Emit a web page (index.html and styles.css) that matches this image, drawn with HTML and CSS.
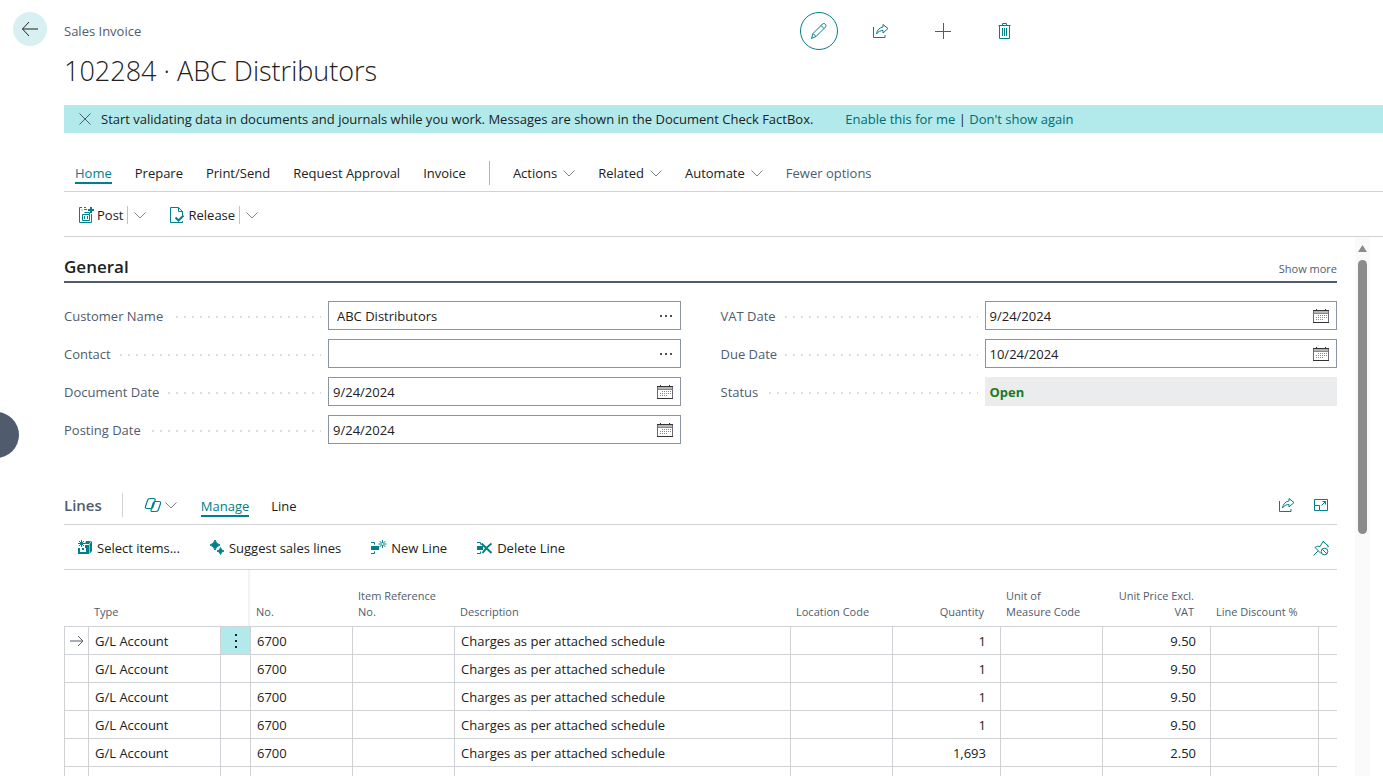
FILE: index.html
```html
<!DOCTYPE html>
<html lang="en">
<head>
  <meta charset="UTF-8" />
  <meta name="viewport" content="width=device-width, initial-scale=1.0"/>
  <title>Sales Invoice - 102284</title>
  <link rel="stylesheet" href="styles.css">
</head>
<body>
  <!-- Shared icons -->
  <svg class="icon-defs" width="0" height="0">
    <symbol id="chevron" viewBox="0 0 12 8"><path d="M.5 1.500 6 7l5.500-5.500" fill="none" stroke="currentColor"/></symbol>
    <symbol id="calendar" viewBox="0 0 16 16">
      <path d="M1 2h14v3H1z" fill="#b5b5b5"/>
      <path d="M.5 2v12M15.500 2v12" fill="none" stroke="#6a6a78"/>
      <path d="M0 2.500h16M0 14.500h16M3.500 1v2M12.500 1v2" fill="none" stroke="#333"/>
      <path d="M1 5.500h14" fill="none" stroke="#888"/>
      <path d="M5 7.500h9M3 9.500h11M3 11.500h8" fill="none" stroke="#888" stroke-dasharray="1 1"/>
    </symbol>
    <symbol id="share" viewBox="0 0 16 16">
      <path d="M.5 4v10.500h11.500V12M10 1.500l5 4-5 4.500V7.500C7.500 7.500 5 8.500 3.500 11 4 7 6.500 4.500 10 4z" fill="none" stroke="currentColor"/>
    </symbol>
  </svg>

  <button class="side-toggle" aria-label="Show list"></button>

  <header class="page-header">
    <button class="back-btn" aria-label="Back">
      <svg width="18" height="16" viewBox="0 0 18 16"><path d="M17 8H1.500M8 1 1.500 8 8 15" fill="none" stroke="currentColor"/></svg>
    </button>
    <p class="page-type">Sales Invoice</p>
    <div class="page-actions">
      <button class="edit-btn" aria-label="Edit">
        <svg width="18" height="18" viewBox="0 0 18 18"><path d="M1.500 16.500 3 11.500 12.500 2c2-1.500 4.500 1 3 3L6 14.500zM3 11.500 6 14.500M11 3.500l3 3" fill="none" stroke="currentColor"/></svg>
      </button>
      <button aria-label="Share"><svg width="16" height="16"><use href="#share"/></svg></button>
      <button aria-label="New"><svg width="16" height="16" viewBox="0 0 16 16"><path d="M8.500 0v16M0 8.500h16" fill="none" stroke="currentColor"/></svg></button>
      <button aria-label="Delete">
        <svg width="14" height="16" viewBox="0 0 14 16"><path d="M.5 2.500h12M4.500 2.500v-2h4v2M1.500 2.500v13h10v-13M4.500 5v8M6.500 5v8M8.500 5v8" fill="none" stroke="currentColor"/></svg>
      </button>
    </div>
  </header>

  <main class="page">
    <h1>102284 · ABC Distributors</h1>

    <div class="notice">
      <button class="notice-close" aria-label="Close">
        <svg width="12" height="12" viewBox="0 0 12 12"><path d="M.5.5l11 11M11.500.5l-11 11" fill="none" stroke="currentColor"/></svg>
      </button>
      <span>Start validating data in documents and journals while you work. Messages are shown in the Document Check FactBox.</span>
      <span class="notice-links"><a href="#">Enable this for me</a> | <a href="#">Don't show again</a></span>
    </div>

    <nav class="tabs">
      <a href="#" class="active">Home</a>
      <a href="#">Prepare</a>
      <a href="#">Print/Send</a>
      <a href="#">Request Approval</a>
      <a href="#">Invoice</a>
      <span class="divider"></span>
      <button>Actions <svg width="12" height="8"><use href="#chevron"/></svg></button>
      <button>Related <svg width="12" height="8"><use href="#chevron"/></svg></button>
      <button>Automate <svg width="12" height="8"><use href="#chevron"/></svg></button>
      <button class="fewer">Fewer options</button>
    </nav>

    <div class="toolbar split-bar">
      <div class="split">
        <button>
          <svg class="teal" width="15" height="16" viewBox="0 0 15 16"><path d="M3 .5H.5v15h12V7M5 .5h2M8 2.500H5M3 2.500v1M3.500 7.500h7v6h-7zM5.500 5.500h5v2M5.500 9v3M8.500 9v3" fill="none" stroke="currentColor"/><path d="M9 3h6M12 0v6" fill="none" stroke="currentColor" stroke-width="2"/></svg>
          Post
        </button>
        <button class="split-more" aria-label="More post options"><svg width="12" height="8"><use href="#chevron"/></svg></button>
      </div>
      <div class="split">
        <button>
          <svg class="teal" width="15" height="16" viewBox="0 0 15 16"><path d="M12.500 14v1.500H.5V.5h8l4 4V8M8.500.5v4h4" fill="none" stroke="currentColor"/><path d="M5.500 10.500l3 3 5-5" fill="none" stroke="currentColor" stroke-width="2"/></svg>
          Release
        </button>
        <button class="split-more" aria-label="More release options"><svg width="12" height="8"><use href="#chevron"/></svg></button>
      </div>
    </div>

    <div class="scroll-area">
      <div class="content">
        <!-- General -->
        <div class="section-head">
          <h2>General</h2>
          <a href="#">Show more</a>
        </div>
        <form class="fields">
          <div class="field-col">
            <div class="field">
              <label for="customer"><span>Customer Name</span></label>
              <div class="box lookup"><input id="customer" type="text" value="ABC Distributors"><button type="button" aria-label="Look up customer"><svg width="14" height="2" viewBox="0 0 14 2"><path d="M1 0h2v2H1zM6 0h2v2H6zM11 0h2v2h-2z" fill="#505050"/></svg></button></div>
            </div>
            <div class="field">
              <label for="contact"><span>Contact</span></label>
              <div class="box lookup"><input id="contact" type="text"><button type="button" aria-label="Look up contact"><svg width="14" height="2" viewBox="0 0 14 2"><path d="M1 0h2v2H1zM6 0h2v2H6zM11 0h2v2h-2z" fill="#505050"/></svg></button></div>
            </div>
            <div class="field">
              <label for="docDate"><span>Document Date</span></label>
              <div class="box"><input id="docDate" type="text" value="9/24/2024"><button type="button" aria-label="Pick document date"><svg width="16" height="16"><use href="#calendar"/></svg></button></div>
            </div>
            <div class="field">
              <label for="postDate"><span>Posting Date</span></label>
              <div class="box"><input id="postDate" type="text" value="9/24/2024"><button type="button" aria-label="Pick posting date"><svg width="16" height="16"><use href="#calendar"/></svg></button></div>
            </div>
          </div>
          <div class="field-col">
            <div class="field">
              <label for="vatDate"><span>VAT Date</span></label>
              <div class="box"><input id="vatDate" type="text" value="9/24/2024"><button type="button" aria-label="Pick VAT date"><svg width="16" height="16"><use href="#calendar"/></svg></button></div>
            </div>
            <div class="field">
              <label for="dueDate"><span>Due Date</span></label>
              <div class="box"><input id="dueDate" type="text" value="10/24/2024"><button type="button" aria-label="Pick due date"><svg width="16" height="16"><use href="#calendar"/></svg></button></div>
            </div>
            <div class="field">
              <label for="status"><span>Status</span></label>
              <output id="status" class="status">Open</output>
            </div>
          </div>
        </form>

        <!-- Lines -->
        <div class="lines-head">
          <h3>Lines</h3>
          <span class="divider"></span>
          <button class="copilot" aria-label="Copilot">
            <svg class="teal" width="18" height="16" viewBox="0 0 18 16"><path d="M6 1.500h3.500q2 0 1.500 1.800L9.200 9.700q-.5 1.800-2 1.800H3q-2 0-1.500-2L3.500 3.500Q4 1.500 6 1.500zM11.200 4.500H15q2 0 1.500 2l-2 6q-.5 2-2.500 2H8.500q-1.900 0-1.400-1.800L9 6.300q.5-1.800 2.200-1.800z" fill="none" stroke="currentColor" stroke-width="1.200"/></svg>
            <svg width="12" height="8"><use href="#chevron"/></svg>
          </button>
          <a href="#" class="active">Manage</a>
          <a href="#">Line</a>
          <div class="lines-icons">
            <button aria-label="Share lines"><svg width="16" height="16"><use href="#share"/></svg></button>
            <button aria-label="Expand"><svg width="16" height="16" viewBox="0 0 16 16"><path d="M1.500 8V2.500h13v11H7M1.500 8.500h5v5h-5zM8.500 8.500l4-4M9.500 4.500h3v3" fill="none" stroke="currentColor"/></svg></button>
          </div>
        </div>
        <div class="toolbar lines-bar">
          <button>
            <svg class="teal" width="16" height="16" viewBox="0 0 16 16"><path d="M4.500 0v7M1 3.500h7M2 1l5 5M7 1 2 6" fill="none" stroke="currentColor"/><path d="M9 1h5l-2 3H8zM1 8h2v4h6V8H8V5h4v9H1zM12.500 4 15 1v10l-2.500 3z" fill="currentColor"/><path d="M5 8h2v2H5z" fill="currentColor"/></svg>
            Select items...
          </button>
          <button>
            <svg class="teal" width="16" height="16" viewBox="0 0 16 16"><path d="M6 0Q7 4 11 5 7 6 6 10 5 6 1 5 5 4 6 0zM11.500 7.500Q12 10.500 15 11 12 11.500 11.500 14.500 11 11.500 8 11 11 10.500 11.500 7.500z" fill="currentColor" stroke="currentColor"/></svg>
            Suggest sales lines
          </button>
          <button>
            <svg class="teal" width="17" height="16" viewBox="0 0 17 16"><path d="M1 2.500h3.500v2M1 13.500h3.500v-2M12.500 0v8M8.500 4h8M9.700 1.200l5.600 5.600M15.300 1.200 9.700 6.800" fill="none" stroke="currentColor"/><path d="M1 6h8v4H1z" fill="currentColor"/><circle cx="12.500" cy="4" r="1" fill="#fff"/></svg>
            New Line
          </button>
          <button>
            <svg class="teal" width="17" height="16" viewBox="0 0 17 16"><path d="M1 2.500h3.500v2M1 13.500h3.500v-2" fill="none" stroke="currentColor"/><path d="M1 6h6v4H1z" fill="currentColor"/><path d="M5.500 3.500 15.500 13M15.500 3.500C12 6 9 9 6.500 13" fill="none" stroke="currentColor" stroke-width="2"/></svg>
            Delete Line
          </button>
          <button class="pin" aria-label="Unpin">
            <svg class="teal" width="16" height="16" viewBox="0 0 16 16"><path d="M.5 15.500 5 11M2 7.500l6 6M2 7.500c2-1.500 3.500-1.500 5-1l3-5 5.500 4.500-1.500 1.500M10 1l5.500 5.500" fill="none" stroke="currentColor"/><circle cx="11.500" cy="11.500" r="3.300" fill="#fff" stroke="currentColor"/><path d="M9.200 9.200l4.600 4.600" stroke="currentColor"/></svg>
          </button>
        </div>

        <table class="lines">
          <thead>
            <tr>
              <th class="c-mark"></th>
              <th class="c-type">Type</th>
              <th class="c-menu"></th>
              <th class="c-code">No.</th>
              <th class="c-code">Item Reference<br>No.</th>
              <th class="c-desc">Description</th>
              <th class="c-code">Location Code</th>
              <th class="c-num">Quantity</th>
              <th class="c-code">Unit of<br>Measure Code</th>
              <th class="c-num">Unit Price Excl.<br>VAT</th>
              <th class="c-disc">Line Discount %</th>
              <th></th>
            </tr>
          </thead>
          <tbody>
            <tr>
              <td class="mark"><svg width="14" height="12" viewBox="0 0 14 12"><path d="M0 6h13M8 1l5 5-5 5" fill="none" stroke="currentColor"/></svg></td>
              <td>G/L Account</td>
              <td class="menu"><button aria-label="Row options"><svg width="4" height="16" viewBox="0 0 4 16"><path d="M1 1h2v2H1zM1 7h2v2H1zM1 13h2v2H1z" fill="currentColor"/></svg></button></td>
              <td>6700</td><td></td><td>Charges as per attached schedule</td><td></td>
              <td class="num">1</td><td></td><td class="num">9.50</td><td></td><td></td>
            </tr>
            <tr>
              <td></td><td>G/L Account</td><td></td>
              <td>6700</td><td></td><td>Charges as per attached schedule</td><td></td>
              <td class="num">1</td><td></td><td class="num">9.50</td><td></td><td></td>
            </tr>
            <tr>
              <td></td><td>G/L Account</td><td></td>
              <td>6700</td><td></td><td>Charges as per attached schedule</td><td></td>
              <td class="num">1</td><td></td><td class="num">9.50</td><td></td><td></td>
            </tr>
            <tr>
              <td></td><td>G/L Account</td><td></td>
              <td>6700</td><td></td><td>Charges as per attached schedule</td><td></td>
              <td class="num">1</td><td></td><td class="num">9.50</td><td></td><td></td>
            </tr>
            <tr>
              <td></td><td>G/L Account</td><td></td>
              <td>6700</td><td></td><td>Charges as per attached schedule</td><td></td>
              <td class="num">1,693</td><td></td><td class="num">2.50</td><td></td><td></td>
            </tr>
            <tr>
              <td></td><td></td><td></td><td></td><td></td><td></td><td></td><td></td><td></td><td></td><td></td><td></td>
            </tr>
          </tbody>
        </table>
      </div>
      <div class="scrollbar">
        <span class="scroll-up"></span>
        <span class="scroll-thumb"></span>
      </div>
    </div>
  </main>
</body>
</html>
```
FILE: styles.css
```css
* {
  margin: 0;
  padding: 0;
  box-sizing: border-box;
}

body {
  display: flex;
  flex-direction: column;
  height: 100vh;
  overflow: hidden;
  background-color: #fff;
  color: #212121;
  font-family: "Open Sans", "Noto Sans", sans-serif;
  font-size: 13px;
  line-height: 20px;
}

button {
  border: none;
  background: none;
  color: inherit;
  font: inherit;
  cursor: pointer;
}

a {
  color: inherit;
  text-decoration: none;
}

svg {
  display: block;
  flex-shrink: 0;
}

.icon-defs {
  position: absolute;
}

.teal {
  color: #00808a;
}

.side-toggle {
  position: absolute;
  left: -27px;
  top: 412px;
  width: 46px;
  height: 46px;
  border-radius: 50%;
  background-color: #505c6d;
}

/* header */
.page-header {
  display: flex;
  align-items: center;
  height: 38px;
  margin-top: 12px;
}

.back-btn {
  display: flex;
  align-items: center;
  justify-content: center;
  align-self: flex-start;
  width: 34px;
  height: 34px;
  margin: 0 17px 0 13px;
  border-radius: 50%;
  background-color: #d9f0f2;
}

.page-type {
  width: 736px;
  color: #505c6d;
}

.page-actions {
  display: flex;
  align-items: center;
  color: #00808a;
}

.page-actions button {
  display: flex;
  align-items: center;
  justify-content: center;
  width: 38px;
  height: 38px;
  margin-right: 24px;
}

.page-actions .edit-btn {
  border: 1px solid #00808a;
  border-radius: 50%;
}

.page {
  display: flex;
  flex-direction: column;
  flex: 1;
  min-height: 0;
  margin-left: 64px;
}

h1 {
  height: 55px;
  font-size: 27px;
  font-weight: 300;
  line-height: 42px;
}

.notice {
  display: flex;
  align-items: center;
  height: 28px;
  padding-left: 15px;
  background-color: #b2eaec;
  white-space: nowrap;
}

.notice-close {
  margin-right: 10px;
  color: #505c6d;
}

.notice-links {
  margin-left: 32px;
}

.notice-links a {
  color: #006a71;
}

/* tabs */
.tabs {
  display: flex;
  align-items: center;
  gap: 23px;
  height: 59px;
  padding: 22px 0 0 11px;
  border-bottom: 1px solid #d0d2d6;
  white-space: nowrap;
}

.tabs button {
  display: flex;
  align-items: center;
  gap: 6px;
}

.tabs button svg,
.split-more svg,
.copilot svg + svg {
  color: #7b8491;
}

.active {
  box-shadow: 0 2px #00808a;
  color: #00808a;
  line-height: 18px;
}

.divider {
  width: 1px;
  height: 24px;
  background-color: #b0b5bd;
}

.tabs .fewer {
  color: #505c6d;
}

.toolbar {
  display: flex;
  align-items: center;
  height: 45px;
  padding-top: 2px;
  border-bottom: 1px solid #d0d2d6;
}

.toolbar button {
  display: flex;
  align-items: center;
  gap: 3px;
}

.split-bar {
  gap: 24px;
  padding-left: 15px;
}

.split {
  display: flex;
  align-items: center;
}

.toolbar .split-more {
  height: 18px;
  margin-left: 4px;
  padding-left: 6px;
  border-left: 1px solid #c0c3c8;
}

/* scrolling content */
.scroll-area {
  display: flex;
  flex: 1;
  min-height: 0;
  overflow: hidden;
}

.content {
  flex: 1;
  min-width: 0;
}

.scrollbar {
  width: 15px;
  margin: 0 13px 0 18px;
  padding-top: 8px;
  background-color: #fafafa;
}

.scroll-up {
  display: block;
  width: 9px;
  height: 7px;
  margin: 0 auto;
  background-color: #8b8b8b;
  clip-path: polygon(50% 0, 100% 100%, 0 100%);
}

.scroll-thumb {
  display: block;
  width: 9px;
  height: 274px;
  margin: 8px auto 0;
  border-radius: 5px;
  background-color: #8b8b8b;
}

.section-head {
  display: flex;
  align-items: flex-end;
  justify-content: space-between;
  height: 46px;
  padding-bottom: 4px;
  border-bottom: 2px solid #505c6d;
}

h2 {
  font-size: 17px;
  font-weight: 600;
  line-height: 20px;
}

.section-head a {
  color: #505c6d;
  font-size: 11px;
  line-height: 16px;
}

.fields {
  display: grid;
  grid-template-columns: 1fr 1fr;
  gap: 40px;
  padding-top: 18px;
}

.field-col {
  display: flex;
  flex-direction: column;
  gap: 9px;
}

.field {
  display: flex;
  align-items: center;
  height: 29px;
}

/* dotted leader behind the label text */
.field label {
  width: 257px;
  margin-right: 7px;
  color: #505c6d;
  background: repeating-linear-gradient(90deg, #dcdcdc 0 2px, transparent 2px 8px) 0 10px / 100% 2px no-repeat;
}

.field label span {
  display: inline-block;
  padding-right: 7px;
  background-color: #fff;
}

.box {
  display: flex;
  align-items: center;
  flex: 1;
  height: 29px;
  padding: 0 7px 0 4px;
  border: 1px solid #8a94a3;
}

.box.lookup {
  padding-left: 8px;
}

.box input {
  flex: 1;
  min-width: 0;
  border: none;
  outline: none;
  color: #212121;
  font: inherit;
}

.status {
  flex: 1;
  height: 29px;
  padding-left: 5px;
  background-color: #ebecee;
  color: #1f7a1f;
  font-weight: 700;
  line-height: 30px;
}

/* lines */
.lines-head {
  display: flex;
  align-items: center;
  height: 39px;
  margin-top: 42px;
  border-bottom: 1px solid #d0d2d6;
}

h3 {
  margin-right: 20px;
  color: #505c6d;
  font-size: 15px;
  font-weight: 600;
}

.lines-head a {
  margin: 2px 22px 0 0;
}

.lines-head .divider {
  background-color: #d0d2d6;
}

.copilot {
  display: flex;
  align-items: center;
  gap: 3px;
  margin: 0 24px 0 21px;
}

.lines-icons {
  display: flex;
  gap: 18px;
  margin-left: auto;
  padding-right: 8px;
  color: #00808a;
}

.lines-bar {
  gap: 29px;
  padding: 2px 8px 0 13px;
}

.lines-bar button {
  gap: 4px;
}

.lines-bar .pin {
  margin-left: auto;
}

.lines {
  width: 100%;
  table-layout: fixed;
  border-collapse: separate;
  border-spacing: 0;
}

.lines th {
  height: 56px;
  padding: 0 6px 6px;
  color: #505c6d;
  font-size: 11px;
  font-weight: 400;
  line-height: 16px;
  text-align: left;
  vertical-align: bottom;
}

.lines .c-mark { width: 24px; }
.lines .c-type { width: 132px; }
.lines .c-menu { width: 30px; border-right: 2px solid #f3f3f3; }
.lines .c-code { width: 102px; }
.lines .c-desc { width: 336px; }
.lines .c-num { width: 108px; padding-right: 16px; text-align: right; }
.lines .c-disc { width: 108px; white-space: nowrap; }

.lines td {
  height: 28px;
  padding: 0 6px;
  border-top: 1px solid #d0d2d6;
  border-left: 1px solid #d0d2d6;
  white-space: nowrap;
}

.lines td.num {
  padding-right: 14px;
  text-align: right;
}

.lines td.mark {
  padding: 0 5px;
  color: #505c6d;
}

.lines td.menu {
  background-color: #b2eaec;
}

.menu button {
  display: flex;
  justify-content: center;
  width: 100%;
}
```
